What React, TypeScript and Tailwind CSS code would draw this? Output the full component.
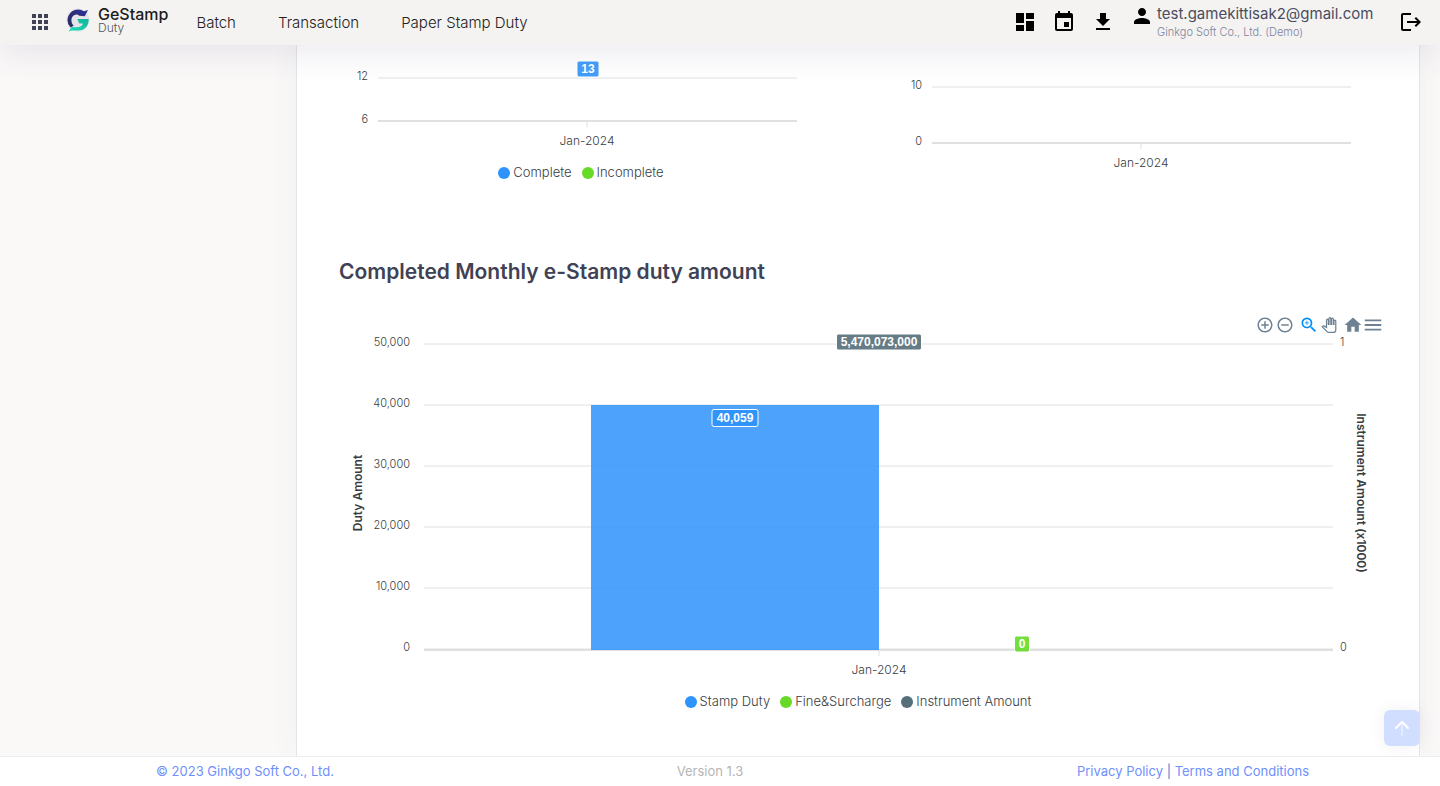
import React from "react";
import {
  MdAddCircleOutline,
  MdApps,
  MdDashboard,
  MdDownload,
  MdEvent,
  MdHome,
  MdLogout,
  MdMenu,
  MdPerson,
  MdRemoveCircleOutline,
  MdZoomIn,
} from "react-icons/md";

const BLUE = "#2e93fa";
const GREEN = "#66da26";
const SLATE = "#546e7a";

function Logo() {
  return (
    <a href="#home" className="flex items-center gap-2">
      <svg viewBox="0 0 24 24" className="size-6" aria-hidden="true">
        <defs>
          <linearGradient id="logo-top" x1="0" y1="1" x2="1" y2="0">
            <stop offset="0" stopColor="#2b2a63" />
            <stop offset="1" stopColor="#2f3196" />
          </linearGradient>
          <linearGradient id="logo-bottom" x1="0" y1="1" x2="1" y2="0">
            <stop offset="0" stopColor="#1fe0b8" />
            <stop offset="1" stopColor="#0fb39b" />
          </linearGradient>
        </defs>
        <circle cx="12" cy="12" r="11.5" fill="#e4e4e8" />
        <path
          d="M4.6 19.4A10.6 10.6 0 0 1 12 1.4c2.400 0 4.400.8 6 1.900L22 2l-3.200 6.200-5.600-.4c-.8-1-2-1.400-3.200-1.200C7 7.200 5.400 9.400 5.400 12.200c0 2.800 1 4.200 2.400 5.400z"
          fill="url(#logo-top)"
        />
        <path
          d="M11.200 11H22.600c.4 6.600-3.800 11.400-10.200 11.600-3.600.1-6.600-.2-9.900.9l3.300-4.700c2.400.6 4.900.8 7.200.2 2-.5 3.400-1.600 4-3.400h-3.700z"
          fill="url(#logo-bottom)"
        />
      </svg>
      <span className="flex flex-col">
        <span className="text-base leading-4 font-medium text-[#1c1c1c]">GeStamp</span>
        <span className="text-xs leading-3 font-light text-[#555]">Duty</span>
      </span>
    </a>
  );
}

function IconButton({ label, children }: { label: string; children: React.ReactNode }) {
  return (
    <button type="button" aria-label={label} className="flex size-6 items-center justify-center">
      {children}
    </button>
  );
}

function Header() {
  return (
    <header className="sticky top-0 z-10 flex h-[45px] items-center bg-[#f4f3f1] pr-[17px] pl-7 shadow-[0_10px_30px_0_rgba(82,63,105,0.1)]">
      <div className="pb-0.5">
        <IconButton label="Applications">
          <MdApps className="size-6 text-[#3f4254]" />
        </IconButton>
      </div>
      <div className="ml-[14px] pb-1.5">
        <Logo />
      </div>
      <nav className="ml-7 flex gap-[42px] pt-0.5 text-[15px] font-light text-[#222]">
        <a href="#batch">Batch</a>
        <a href="#transaction">Transaction</a>
        <a href="#paper">Paper Stamp Duty</a>
      </nav>
      <div className="ml-auto flex items-center gap-[15px] pb-0.5 text-black">
        <IconButton label="Dashboard">
          <MdDashboard className="size-6" />
        </IconButton>
        <IconButton label="Calendar">
          <MdEvent className="size-6" />
        </IconButton>
        <IconButton label="Download">
          <MdDownload className="size-6" />
        </IconButton>
        <div className="flex gap-[3px]">
          <MdPerson className="size-6" />
          <div className="flex min-w-[219px] flex-col">
            <span className="text-[15px] leading-5 text-[#4a4d60]">
              test.gamekittisak2@gmail.com
            </span>
            <span className="text-[11px] leading-4 font-light text-[#7e82a0]">
              Ginkgo Soft Co., Ltd. (Demo)
            </span>
          </div>
        </div>
        <div className="ml-2">
          <IconButton label="Log out">
            <MdLogout className="size-6" />
          </IconButton>
        </div>
      </div>
    </header>
  );
}

type TagProps = { x: number; y: number; w: number; h: number; fill: string; text: string };

function Tag({ x, y, w, h, fill, text }: TagProps) {
  return (
    <g>
      <rect x={x - w / 2} y={y - h / 2} width={w} height={h} rx="2" fill={fill} fillOpacity="0.9" stroke="#fff" />
      <text
        x={x}
        y={y + 4}
        textAnchor="middle"
        fill="#fff"
        className="font-['Liberation_Sans',sans-serif] text-[12px] font-bold"
      >
        {text}
      </text>
    </g>
  );
}

type Tick = { y: number; label: string };

function SmallChart({
  ticks,
  height,
  tag,
  name,
}: {
  ticks: Tick[];
  height: number;
  tag?: string;
  name: string;
}) {
  const base = ticks[ticks.length - 1].y;
  return (
    <svg viewBox={`0 0 554 ${height}`} className="w-full" role="img" aria-label={name}>
      {ticks.map((t) => (
        <g key={t.label}>
          <line x1="74" x2="493" y1={t.y} y2={t.y} stroke="#e0e0e0" />
          <text x="64" y={t.y + 2} textAnchor="end" fill="#373d3f" className="text-[11px] font-light">
            {t.label}
          </text>
        </g>
      ))}
      <line x1="74" x2="493" y1={base} y2={base} stroke="#e0e0e0" strokeWidth="2" />
      <line x1="283" x2="283" y1={base} y2={base + 6} stroke="#e0e0e0" />
      <text x="283" y={base + 24} textAnchor="middle" fill="#373d3f" className="text-[12px] font-light">
        Jan-2024
      </text>
      {tag && <Tag x={284} y={24} w={22} h={16} fill={BLUE} text={tag} />}
    </svg>
  );
}

function Legend({ items }: { items: { color: string; label: string }[] }) {
  return (
    <ul className="flex h-9 items-center justify-center gap-[10px] text-[13px] font-light text-[#373d3f]">
      {items.map((i) => (
        <li key={i.label} className="flex items-center gap-[3px]">
          <svg viewBox="0 0 12 12" className="size-3" aria-hidden="true">
            <circle cx="6" cy="6" r="6" fill={i.color} />
          </svg>
          {i.label}
        </li>
      ))}
    </ul>
  );
}

const TOOL = "flex size-5 items-center justify-center";

function ChartToolbar() {
  return (
    <div className="flex h-5 justify-end gap-1 pr-9 text-[#6e8192]">
      <div className="flex">
        <button type="button" aria-label="Zoom in" className={TOOL}>
          <MdAddCircleOutline className="size-[18px]" />
        </button>
        <button type="button" aria-label="Zoom out" className={TOOL}>
          <MdRemoveCircleOutline className="size-[18px]" />
        </button>
      </div>
      <div className="flex">
        <button type="button" aria-label="Selection zoom" className={`${TOOL} text-[#008ffb]`}>
          <MdZoomIn className="size-5" />
        </button>
        <button type="button" aria-label="Panning" className={TOOL}>
          <svg viewBox="-1 -1 26 26" className="size-4" fill="#fff" stroke="currentColor" strokeWidth="2">
            <path d="M23 5.500V20c0 2.200-1.800 4-4 4h-7.300c-1.080 0-2.100-.43-2.850-1.190L1 14.830s1.260-1.230 1.300-1.250c.22-.19.49-.29.79-.29.22 0 .42.06.6.16.04.01 4.310 2.460 4.310 2.460V4c0-.83.67-1.500 1.500-1.500S11 3.170 11 4v7h1V1.500c0-.83.67-1.500 1.500-1.500S15 .67 15 1.500V11h1V2.500c0-.83.67-1.500 1.500-1.500s1.500.67 1.500 1.500V11h1V5.500c0-.83.67-1.500 1.500-1.500s1.500.67 1.500 1.500z" />
          </svg>
        </button>
      </div>
      <div className="flex">
        <button type="button" aria-label="Reset zoom" className={TOOL}>
          <MdHome className="size-5" />
        </button>
        <button type="button" aria-label="Menu" className={TOOL}>
          <MdMenu className="size-[22px] shrink-0" />
        </button>
      </div>
    </div>
  );
}

const AMOUNT_TICKS: Tick[] = [
  { y: 9, label: "50,000" },
  { y: 70, label: "40,000" },
  { y: 131, label: "30,000" },
  { y: 192, label: "20,000" },
  { y: 253, label: "10,000" },
  { y: 314, label: "0" },
];

function AmountChart() {
  return (
    <svg
      viewBox="0 0 1122 349"
      className="w-full overflow-visible"
      role="img"
      aria-label="Completed Monthly e-Stamp duty amount"
    >
      {AMOUNT_TICKS.map((t) => (
        <g key={t.label}>
          <line x1="127" x2="1036" y1={t.y} y2={t.y} stroke="#e0e0e0" />
          <text x="113" y={t.y + 2} textAnchor="end" fill="#373d3f" className="text-[11px] font-light">
            {t.label}
          </text>
        </g>
      ))}
      <line x1="127" x2="1036" y1="315" y2="315" stroke="#e0e0e0" strokeWidth="2" />
      <line x1="582" x2="582" y1="315" y2="321" stroke="#e0e0e0" />
      <rect x="294" y="70" width="288" height="245" fill={BLUE} fillOpacity="0.85" />
      <text x="1043" y="11" fill="#373d3f" className="text-[11px] font-light">
        1
      </text>
      <text x="1043" y="316" fill="#373d3f" className="text-[11px] font-light">
        0
      </text>
      <text
        transform="translate(65 158) rotate(-90)"
        textAnchor="middle"
        fill="#373d3f"
        className="text-[12px] font-semibold"
      >
        Duty Amount
      </text>
      <text
        transform="translate(1060 158) rotate(90)"
        textAnchor="middle"
        fill="#373d3f"
        className="text-[12px] font-semibold"
      >
        Instrument Amount (x1000)
      </text>
      <Tag x={438} y={83} w={46} h={17} fill={BLUE} text="40,059" />
      <Tag x={582} y={7} w={85} h={16} fill={SLATE} text="5,470,073,000" />
      <Tag x={725} y={309} w={15} h={16} fill={GREEN} text="0" />
      <text x="582" y="339" textAnchor="middle" fill="#373d3f" className="text-[12px] font-light">
        Jan-2024
      </text>
    </svg>
  );
}

export default function App() {
  return (
    <div className="flex min-h-screen flex-col bg-[#faf9f8] font-['Inter',sans-serif]">
      <Header />
      <div className="flex flex-1">
        <aside className="w-[296px] shrink-0" />
        <main className="mr-5 min-w-0 flex-1 border-x border-[#e4e4ec] bg-white shadow-[0_0_30px_0_rgba(82,63,105,0.05)]">
          <div className="grid grid-cols-2 px-[7px]">
            <div>
              <SmallChart
                name="Monthly transactions"
                height={110}
                tag="13"
                ticks={[
                  { y: 33, label: "12" },
                  { y: 76, label: "6" },
                ]}
              />
              <Legend
                items={[
                  { color: BLUE, label: "Complete" },
                  { color: GREEN, label: "Incomplete" },
                ]}
              />
            </div>
            <SmallChart
              name="Monthly documents"
              height={130}
              ticks={[
                { y: 42, label: "10" },
                { y: 98, label: "0" },
              ]}
            />
          </div>
          <h2 className="mt-[66px] mb-7 px-[42px] text-[21px] leading-[30px] font-semibold text-[#3f4254]">
            Completed Monthly e-Stamp duty amount
          </h2>
          <ChartToolbar />
          <AmountChart />
          <Legend
            items={[
              { color: BLUE, label: "Stamp Duty" },
              { color: GREEN, label: "Fine&Surcharge" },
              { color: SLATE, label: "Instrument Amount" },
            ]}
          />
        </main>
      </div>
      <footer className="sticky bottom-0 grid h-[30px] grid-cols-[490fr_440fr_510fr] items-center border-t border-[#ebedf0] bg-white text-center text-[13px] text-[#6f8ffb]">
        <a href="#company">© 2023 Ginkgo Soft Co., Ltd.</a>
        <span className="text-[#b5b5b5]">Version 1.3</span>
        <p className="pl-4">
          <a href="#privacy">Privacy Policy</a> <span className="text-[#3c82d6]">|</span>{" "}
          <a href="#terms">Terms and Conditions</a>
        </p>
      </footer>
      <button
        type="button"
        aria-label="Scroll to top"
        className="fixed right-5 bottom-10 flex size-9 items-center justify-center rounded-md bg-[#d1deff] shadow-[0_0_15px_0_rgba(82,63,105,0.08)]"
      >
        <svg viewBox="0 0 24 24" className="size-6" fill="none" stroke="#fff" strokeWidth="2" strokeLinecap="round" strokeLinejoin="round">
          <path d="M12 7v12" strokeOpacity="0.4" />
          <path d="M6 12l6-6 6 6" />
        </svg>
      </button>
    </div>
  );
}
